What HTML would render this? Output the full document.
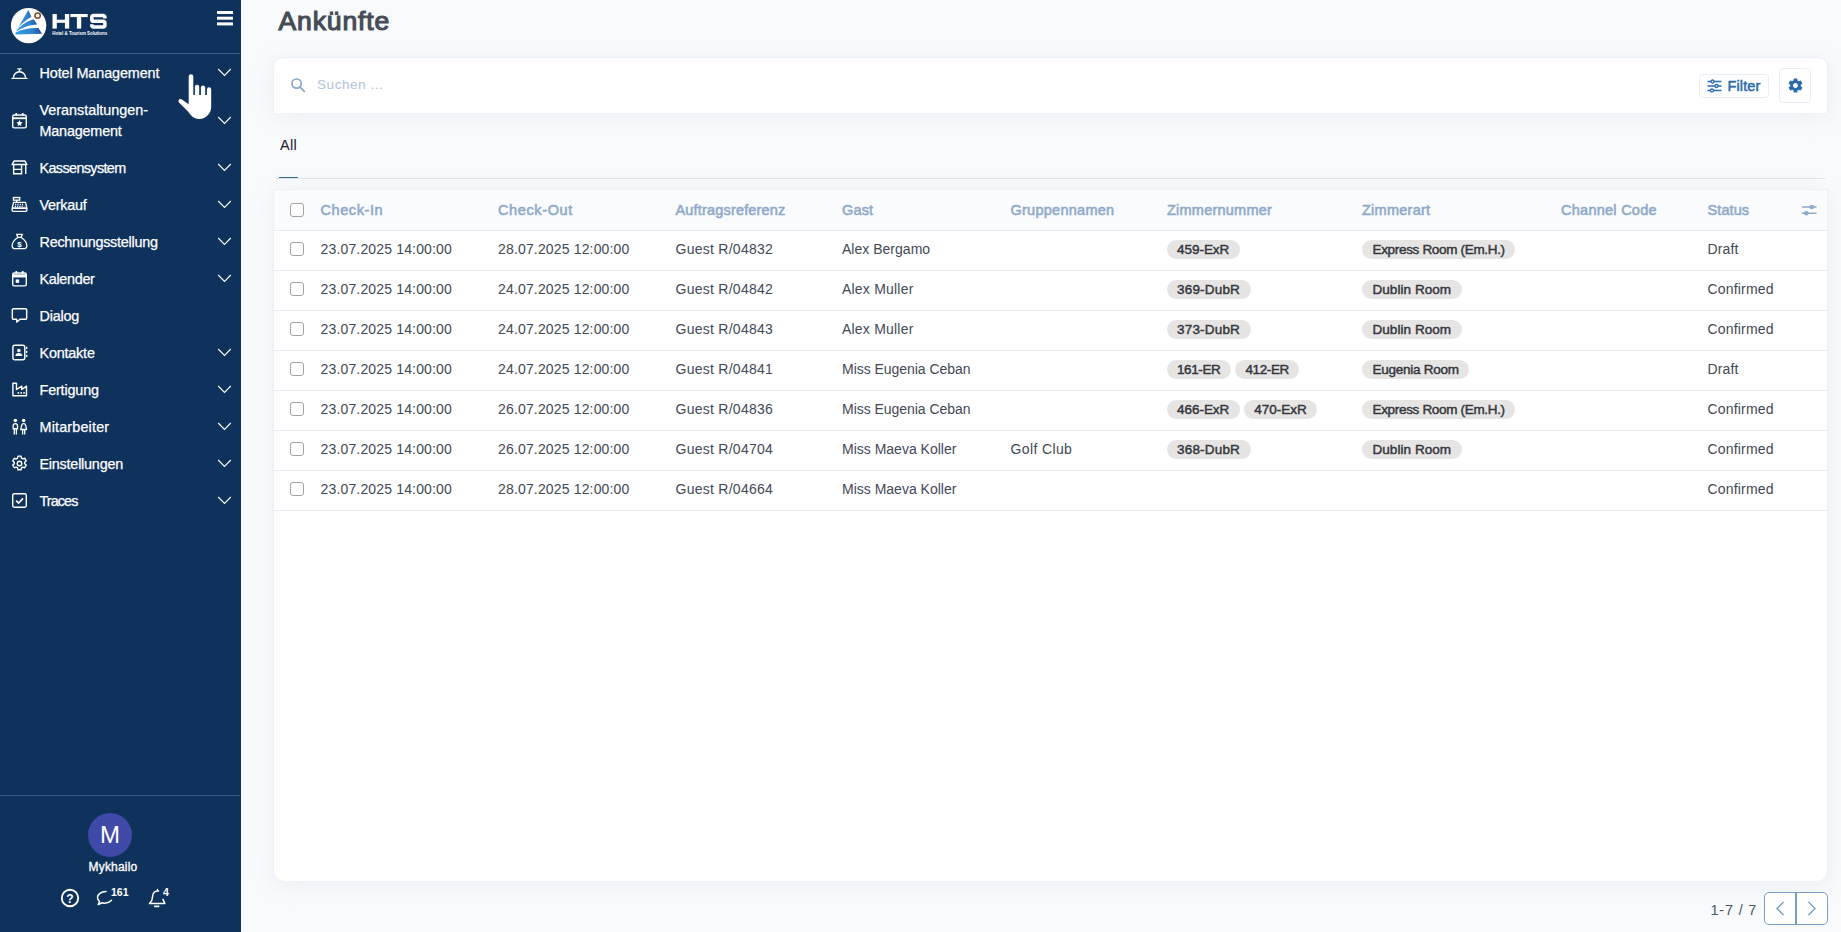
<!DOCTYPE html>
<html><head><meta charset="utf-8">
<style>
*{box-sizing:border-box;margin:0;padding:0}
html,body{width:1841px;height:932px;overflow:hidden}
body{font-family:"Liberation Sans",sans-serif;background:#f8fafc;position:relative;color:#374151}
span{white-space:nowrap}
#sb{position:absolute;left:0;top:0;width:241px;height:932px;background:#0f325c;color:#fff}
#sb .div1{position:absolute;left:0;top:53px;width:240px;height:1px;background:#3d5a80}
#sb .div2{position:absolute;left:0;top:795px;width:240px;height:1px;background:#3d5a80}
.mi{position:absolute;left:39.5px;font-size:14.4px;line-height:21px;color:#fff;white-space:nowrap;-webkit-text-stroke:0.25px #fff}
.ic{position:absolute;left:10.5px;width:17px;height:17px;margin-top:0.2px}
.ch{position:absolute;left:217px;width:15px;height:9px}
#main{position:absolute;left:241px;top:0;width:1600px;height:932px}
h1{position:absolute;left:37.5px;top:5.5px;font-size:26.5px;line-height:30px;color:#464c56;font-weight:normal;-webkit-text-stroke:1.15px #464c56}
.card{position:absolute;background:#fff;box-shadow:inset 0 1px 0 #ebf0f7,inset 1px 0 0 #ebf0f7,inset -1px 0 0 #ebf0f7,0 4px 22px rgba(203,213,225,.28)}
.in{position:absolute;left:1px;top:0;width:1553px;height:100%}
#search{left:32px;top:57px;width:1555px;height:56px;border-radius:10px 10px 0 0}
#tbl{left:32px;top:189px;width:1555px;height:692px;overflow:hidden;border-radius:0 0 10px 10px}
.hdr{position:absolute;left:0;top:1px;width:100%;height:41px;background:#f9fbfd;border-bottom:1px solid #e5ecf4}
.row{position:absolute;left:0;width:100%;height:40px;border-bottom:1px solid #e5ecf4}
.c{position:absolute;top:0;line-height:37px;font-size:14px;white-space:nowrap;color:#424955}
.hdr .c{top:-2px;line-height:44px;color:#8fa9c8;font-weight:normal;-webkit-text-stroke:0.55px #8fa9c8;font-size:14.5px}
.cb{position:absolute;left:16px;width:14px;height:14px;border:1px solid #a3a3a3;border-radius:3px;background:#fff}
.tag{display:inline-block;height:19px;line-height:19px;border-radius:10px;background:#e7e5e4;padding:0 10.5px;font-size:13.5px;color:#33363d;-webkit-text-stroke:0.45px #33363d;margin-right:4px;vertical-align:middle;position:relative;top:-1px}
</style></head><body>
<div id="sb">
<div class="div1"></div><div class="div2"></div>
<svg style="position:absolute;left:0;top:0;width:120px;height:50px" viewBox="0 0 120 50">
<defs><linearGradient id="lg" gradientUnits="userSpaceOnUse" x1="15" y1="30" x2="42" y2="22"><stop offset="0" stop-color="#2f9fe0"/><stop offset="0.55" stop-color="#2f86cf"/><stop offset="1" stop-color="#1b3f8f"/></linearGradient></defs>
<circle cx="28.600" cy="25.600" r="17.700" fill="#fff"/>
<path d="M28.300 10.100L31.400 16.700C25 20.500 19.500 25.500 16.800 29.600L15.600 32.200z" fill="url(#lg)"/>
<path d="M17.600 29.600C21.500 25 27.500 21 33.700 19.300L37.300 24.400C29.500 24.600 21.500 27.800 16.300 31.400z" fill="url(#lg)"/>
<path d="M15.700 32.600C22 29 30.500 27.600 38.500 28L42 33.700 15.500 34.400z" fill="url(#lg)"/>
<circle cx="37.600" cy="15.600" r="2.700" fill="#fff" stroke="#8a4a1c" stroke-width="1.500"/>
<g fill="#fff"><rect x="52.500" y="14" width="4.300" height="14.600"/><rect x="64.900" y="14" width="4.300" height="14.600"/><rect x="54" y="19.700" width="13" height="3.100"/>
<rect x="70.400" y="14" width="17.300" height="3.100"/><rect x="76.900" y="14" width="4.300" height="14.600"/></g>
<path d="M104.900 18.600V17.600Q104.900 15.600 102.900 15.600H93.800Q91.800 15.600 91.800 17.600V19.400Q91.800 21.300 93.800 21.300H102.900Q104.900 21.300 104.900 23.200V25Q104.900 27 102.900 27H93.800Q91.800 27 91.800 25V24.200" fill="none" stroke="#fff" stroke-width="3.500"/>
<text x="52.300" y="34.500" font-family="Liberation Sans" font-weight="bold" font-size="4.600" fill="#fff" textLength="54.800" lengthAdjust="spacingAndGlyphs">Hotel &amp; Tourism Solutions</text>
</svg>
<div style="position:absolute;left:217px;top:11px;width:16px;height:2.600px;background:#fff;box-shadow:0 5.700px 0 #fff,0 11.400px 0 #fff"></div>
<svg class="ic" style="top:64px" viewBox="0 0 18 18" fill="none" stroke="#fff" stroke-width="1.5"><path d="M1 15.2h16" stroke-linecap="round"/><path d="M2.600 14.600a6.400 6.400 0 0 1 12.800 0"/><path d="M7.300 5.200h3.400" stroke-linecap="round"/><path d="M9 5.400v2.600"/></svg>
<div class="mi" style="top:63px"><span style="letter-spacing:-0.106px">Hotel Management</span></div>
<svg class="ch" style="top:68px" viewBox="0 0 15 9" fill="none" stroke="#fff" stroke-width="1.1"><path d="M1.200 1l6.300 6.400L13.800 1"/></svg>
<svg class="ic" style="top:159px" viewBox="0 0 18 18" fill="none" stroke="#fff" stroke-width="1.5"><path d="M3.200 2.200h11.600l2 3.600H1.200z" stroke-linejoin="round"/><path d="M2.800 6v9.600h8.400V6M2.800 11h8.400M15.600 6v10"/></svg>
<div class="mi" style="top:158px"><span style="letter-spacing:-0.621px">Kassensystem</span></div>
<svg class="ch" style="top:163px" viewBox="0 0 15 9" fill="none" stroke="#fff" stroke-width="1.1"><path d="M1.200 1l6.300 6.400L13.800 1"/></svg>
<svg class="ic" style="top:196px" viewBox="0 0 18 18" fill="none" stroke="#fff" stroke-width="1.4"><rect x="2.600" y="1.600" width="6.600" height="2.800"/><path d="M6 4.400v2.200"/><path d="M2.600 6.800h12.800l1.400 6.200H1.200z" stroke-linejoin="round"/><rect x="1.200" y="13" width="15.600" height="3.200" rx="1"/><path d="M4.400 9h9.200M4 11h10" stroke-dasharray="1.2 1.2"/></svg>
<div class="mi" style="top:195px"><span style="letter-spacing:-0.260px">Verkauf</span></div>
<svg class="ch" style="top:200px" viewBox="0 0 15 9" fill="none" stroke="#fff" stroke-width="1.1"><path d="M1.200 1l6.300 6.400L13.800 1"/></svg>
<svg class="ic" style="top:233px" viewBox="0 0 18 18" fill="none" stroke="#fff" stroke-width="1.4"><path d="M6 1.400h6L10.800 4.600H7.200z" stroke-linejoin="round"/><path d="M7.200 4.800C3.600 7.200 1.200 10.800 1.200 13.400c0 2 1.600 3.200 3.600 3.200h8.400c2 0 3.600-1.200 3.600-3.200 0-2.600-2.400-6.200-6-8.600"/><text x="9" y="14.600" font-size="8.500" font-weight="bold" fill="#fff" stroke="none" text-anchor="middle" font-family="Liberation Sans">$</text></svg>
<div class="mi" style="top:232px"><span style="letter-spacing:-0.244px">Rechnungsstellung</span></div>
<svg class="ch" style="top:237px" viewBox="0 0 15 9" fill="none" stroke="#fff" stroke-width="1.1"><path d="M1.200 1l6.300 6.400L13.800 1"/></svg>
<svg class="ic" style="top:270px" viewBox="0 0 18 18" fill="none" stroke="#fff" stroke-width="1.5"><rect x="1.800" y="3.200" width="14.400" height="13.600" rx="1.800"/><path d="M1.800 6.200h14.400" stroke-width="3.400"/><path d="M5.600 1v3M12.400 1v3" stroke-width="1.800"/><rect x="5" y="10" width="3.600" height="3.600" fill="#fff" stroke="none"/></svg>
<div class="mi" style="top:269px"><span style="letter-spacing:-0.316px">Kalender</span></div>
<svg class="ch" style="top:274px" viewBox="0 0 15 9" fill="none" stroke="#fff" stroke-width="1.1"><path d="M1.200 1l6.300 6.400L13.800 1"/></svg>
<svg class="ic" style="top:307px" viewBox="0 0 18 18" fill="none" stroke="#fff" stroke-width="1.5"><path d="M2.800 1.800h12.400a1.400 1.400 0 0 1 1.400 1.400v8.400a1.400 1.400 0 0 1-1.400 1.400H9.600L6 16v-3H2.800a1.400 1.400 0 0 1-1.400-1.400V3.200a1.400 1.400 0 0 1 1.400-1.400z" stroke-linejoin="round"/></svg>
<div class="mi" style="top:306px"><span style="letter-spacing:-0.222px">Dialog</span></div>
<svg class="ic" style="top:344px" viewBox="0 0 18 18" fill="none" stroke="#fff" stroke-width="1.5"><rect x="2" y="1.400" width="12.600" height="15.200" rx="2"/><circle cx="8.300" cy="6.800" r="1.900" fill="#fff" stroke="none"/><path d="M4.600 12.600c0-2.200 1.600-3.200 3.700-3.200s3.700 1 3.700 3.200z" fill="#fff" stroke="none"/><path d="M16.600 3v2.400M16.600 7.200v2.400M16.600 11.400v2.400" stroke-width="1.4"/></svg>
<div class="mi" style="top:343px"><span style="letter-spacing:-0.202px">Kontakte</span></div>
<svg class="ch" style="top:348px" viewBox="0 0 15 9" fill="none" stroke="#fff" stroke-width="1.1"><path d="M1.200 1l6.300 6.400L13.800 1"/></svg>
<svg class="ic" style="top:381px" viewBox="0 0 18 18" fill="none" stroke="#fff" stroke-width="1.5"><path d="M2 2.400v13.200h14.400V5.400l-5 3.600V5.400L5.800 9V2.400z" stroke-linejoin="round"/><path d="M7 12.600h1.600M10 12.600h1.600M13 12.600h1.600" stroke-width="1.8"/></svg>
<div class="mi" style="top:380px"><span style="letter-spacing:-0.162px">Fertigung</span></div>
<svg class="ch" style="top:385px" viewBox="0 0 15 9" fill="none" stroke="#fff" stroke-width="1.1"><path d="M1.200 1l6.300 6.400L13.800 1"/></svg>
<svg class="ic" style="top:418px" viewBox="0 0 18 18" fill="none" stroke="#fff" stroke-width="1.4"><circle cx="4.600" cy="2.600" r="1.900" fill="#fff" stroke="none"/><circle cx="13.400" cy="2.600" r="1.900" fill="#fff" stroke="none"/><path d="M2.300 11.400V8.200a2.300 2.300 0 0 1 4.600 0v3.200z"/><path d="M3.500 11.600v5.800M5.700 11.600v5.800"/><path d="M13.400 6c-1.300 0-1.900.8-2.100 1.800l-1 4.400h6.200l-1-4.400c-.2-1-.8-1.800-2.100-1.800z" stroke-linejoin="round"/><path d="M12.300 12.400v5M14.500 12.400v5"/></svg>
<div class="mi" style="top:417px"><span style="letter-spacing:0.162px">Mitarbeiter</span></div>
<svg class="ch" style="top:422px" viewBox="0 0 15 9" fill="none" stroke="#fff" stroke-width="1.1"><path d="M1.200 1l6.300 6.400L13.800 1"/></svg>
<svg class="ic" style="top:455px" viewBox="0 0 18 18" fill="none" stroke="#fff" stroke-width="1.5"><circle cx="9" cy="9" r="2.400"/><path d="M7.400 1.200h3.200l.5 2.200 1.300.7 2.100-.7 1.600 2.800-1.600 1.500v1.500l1.600 1.500-1.600 2.800-2.100-.7-1.300.7-.5 2.200H7.400l-.5-2.200-1.300-.7-2.100.7-1.600-2.800 1.600-1.500V7.800L1.900 6.300l1.600-2.800 2.100.7 1.300-.7z" stroke-linejoin="round"/></svg>
<div class="mi" style="top:454px"><span style="letter-spacing:-0.227px">Einstellungen</span></div>
<svg class="ch" style="top:459px" viewBox="0 0 15 9" fill="none" stroke="#fff" stroke-width="1.1"><path d="M1.200 1l6.300 6.400L13.800 1"/></svg>
<svg class="ic" style="top:492px" viewBox="0 0 18 18" fill="none" stroke="#fff" stroke-width="1.5"><rect x="1.800" y="1.800" width="14.400" height="14.400" rx="1.800"/><path d="M5.400 9.200l2.600 2.600 4.800-5" stroke-width="1.7"/></svg>
<div class="mi" style="top:491px"><span style="letter-spacing:-0.911px">Traces</span></div>
<svg class="ch" style="top:496px" viewBox="0 0 15 9" fill="none" stroke="#fff" stroke-width="1.1"><path d="M1.200 1l6.300 6.400L13.800 1"/></svg>
<svg class="ic" style="top:112px" viewBox="0 0 18 18" fill="none" stroke="#fff" stroke-width="1.5"><rect x="1.800" y="3.200" width="14.400" height="13.600" rx="1.800"/><path d="M1.800 6.600h14.400" stroke-width="2"/><path d="M5.600 1v3M12.400 1v3" stroke-width="1.800"/><path d="M9 8.600l1 2.100 2.300.3-1.700 1.600.4 2.300-2-1.100-2 1.100.4-2.300-1.700-1.600 2.300-.3z" fill="#fff" stroke="none"/></svg>
<div class="mi" style="top:100px"><span style="letter-spacing:-0.021px">Veranstaltungen-</span><br><span style="letter-spacing:-0.194px">Management</span></div>
<svg class="ch" style="top:116px" viewBox="0 0 15 9" fill="none" stroke="#fff" stroke-width="1.1"><path d="M1.200 1l6.300 6.400L13.800 1"/></svg>
<svg style="position:absolute;left:170px;top:55px;width:70px;height:80px" viewBox="0 0 70 80"><path d="M18.700 21.600a2.300 2.300 0 0 1 4.600 0V39.900h1.600V31.800a2.150 2.150 0 0 1 4.300 0V39.900h1.700V32.600a2.150 2.150 0 0 1 4.300 0V39.900h1.700V34.400a2.150 2.150 0 0 1 4.300 0V51.500C41.200 58.500 36 63.900 29.500 63.900C24 63.900 21 61 18 56.500L9 47.500C7.500 45.500 9.500 43 11.500 44.200L18.700 49.300Z" fill="#fff"/></svg>
<div style="position:absolute;left:88px;top:813px;width:44px;height:44px;border-radius:22px;background:#3f4aa8;color:#fff;font-size:24px;line-height:44px;text-align:center">M</div>
<div style="position:absolute;left:0;width:226px;top:858px;text-align:center;font-size:12px;line-height:18px;color:#fff;letter-spacing:0.200px;-webkit-text-stroke:0.300px #fff">Mykhailo</div>
<svg style="position:absolute;left:59px;top:886px;width:22px;height:22px" viewBox="0 0 22 22" fill="none" stroke="#fff"><circle cx="11" cy="12" r="8.200" stroke-width="1.900"/><text x="11" y="16.500" font-family="Liberation Sans" font-weight="bold" font-size="12" fill="#fff" stroke="none" text-anchor="middle">?</text></svg>
<svg style="position:absolute;left:95px;top:886px;width:22px;height:22px" viewBox="0 0 22 22" fill="none" stroke="#fff" stroke-width="1.500"><path d="M11 5.500C6 5.500 2.500 8.500 2.500 11.500c0 1.800.8 3 2 4l-1.300 3 4-1.700c1 .4 2.400.4 3.500.2 2.300-.3 4.500-1.300 5.800-2.800" stroke-linecap="round" stroke-linejoin="round"/></svg>
<div style="position:absolute;left:111px;top:885px;font-size:10.500px;font-weight:bold;line-height:14px;color:#fff">161</div>
<svg style="position:absolute;left:146px;top:886px;width:22px;height:24px" viewBox="0 0 22 24" fill="none" stroke="#fff" stroke-width="1.500"><path d="M11.500 3.500v1.600M12.500 5C8.500 4.500 6.500 7.500 6.500 11c0 3-1.200 4.800-3 6.600h15.300l-1.800-4.200" stroke-linecap="round" stroke-linejoin="round"/><path d="M8.800 20.300h3.800" stroke-width="1.800" stroke-linecap="round"/></svg>
<div style="position:absolute;left:163px;top:885px;font-size:10.500px;font-weight:bold;line-height:14px;color:#fff">4</div>
</div>
<div id="main">
<h1><span style="letter-spacing:0.884px">Ankünfte</span></h1>
<div class="card" id="search"><div class="in">
<svg style="position:absolute;left:16px;top:20px;width:16px;height:16px" viewBox="0 0 16 16" fill="none" stroke="#86a6c8" stroke-width="1.700"><circle cx="6.600" cy="6.600" r="4.600"/><path d="M10 10l4.300 4.300" stroke-linecap="round"/></svg>
<div style="position:absolute;left:43px;top:18px;font-size:13.700px;line-height:20px;color:#b1c3d8;letter-spacing:0.450px">Suchen ...</div>
<div style="position:absolute;left:1425px;top:17px;width:70px;height:24px;border:1px solid #e8eef5;border-radius:4px;background:#fff"></div>
<svg style="position:absolute;left:1433px;top:22px;width:15px;height:14px" viewBox="0 0 15 14" fill="#fff" stroke="#2a6bab" stroke-width="1.300"><path d="M0.500 2.500h14M0.500 7h14M0.500 11.500h14"/><circle cx="5.500" cy="2.500" r="1.500"/><circle cx="9.500" cy="7" r="1.500"/><circle cx="5" cy="11.500" r="1.500"/></svg>
<div style="position:absolute;left:1453.5px;top:19px;font-size:14.5px;line-height:20px;color:#2a6bab;-webkit-text-stroke:0.5px #2a6bab"><span style="letter-spacing:0.113px">Filter</span></div>
<div style="position:absolute;left:1505px;top:11px;width:32px;height:35px;border:1px solid #e8eef5;border-radius:4px;background:#fff"></div>
<svg style="position:absolute;left:1512.5px;top:20px;width:17px;height:17px" viewBox="0 0 24 24"><path fill="#2a6bab" d="M19.430 12.980c.040-.320.070-.640.070-.980s-.030-.660-.070-.980l2.110-1.650c.190-.150.240-.420.120-.640l-2-3.460c-.120-.220-.390-.300-.610-.220l-2.490 1c-.520-.400-1.080-.730-1.690-.980l-.380-2.650C14.460 2.180 14.250 2 14 2h-4c-.250 0-.460.180-.490.420l-.380 2.650c-.610.250-1.170.590-1.690.980l-2.490-1c-.230-.090-.490 0-.610.220l-2 3.460c-.130.220-.070.490.120.640l2.110 1.650c-.040.320-.070.650-.070.980s.030.660.070.980l-2.110 1.650c-.190.150-.240.420-.120.640l2 3.460c.120.220.390.300.610.220l2.490-1c.520.400 1.080.730 1.690.980l.380 2.650c.030.240.240.420.490.420h4c.250 0 .460-.180.490-.420l.380-2.650c.610-.250 1.170-.590 1.690-.980l2.490 1c.230.090.490 0 .610-.220l2-3.460c.120-.220.070-.490-.120-.640l-2.110-1.650zM12 15.500c-1.930 0-3.500-1.570-3.500-3.500s1.570-3.500 3.500-3.500 3.500 1.570 3.500 3.500-1.570 3.500-3.500 3.500z"/></svg>
</div></div>
<div style="position:absolute;left:39px;top:135px;font-size:14.500px;line-height:20px;color:#1a202c;letter-spacing:0.300px">All</div>
<div style="position:absolute;left:36px;top:178px;width:1548px;height:1px;background:#dfe3e7"></div>
<div style="position:absolute;left:38px;top:177px;width:19px;height:1px;background:#2a6aa5"></div>
<div class="card" id="tbl"><div class="in">
<div class="hdr"><div class="cb" style="top:13px"></div>
<div class="c" style="left:46.5px"><span style="letter-spacing:0.581px">Check-In</span></div>
<div class="c" style="left:224px"><span style="letter-spacing:0.630px">Check-Out</span></div>
<div class="c" style="left:401.5px"><span style="letter-spacing:0.176px">Auftragsreferenz</span></div>
<div class="c" style="left:568px"><span style="letter-spacing:0.158px">Gast</span></div>
<div class="c" style="left:736.5px"><span style="letter-spacing:0.258px">Gruppennamen</span></div>
<div class="c" style="left:893px"><span style="letter-spacing:0.231px">Zimmernummer</span></div>
<div class="c" style="left:1088px"><span style="letter-spacing:0.255px">Zimmerart</span></div>
<div class="c" style="left:1287px"><span style="letter-spacing:0.262px">Channel Code</span></div>
<div class="c" style="left:1433.5px"><span style="letter-spacing:0.098px">Status</span></div>
<svg style="position:absolute;left:1527px;top:13px;width:16px;height:14px" viewBox="0 0 16 14" fill="#8fa9c8" stroke="#8fa9c8" stroke-width="1.400"><path d="M1 4h14.500M1 10.200h14.500"/><circle cx="10.800" cy="4" r="2.300" stroke="none"/><circle cx="5.300" cy="10.200" r="2.300" stroke="none"/></svg>
</div>
<div class="row" style="top:42px"><div class="cb" style="top:11px"></div>
<div class="c" style="left:46.5px"><span style="letter-spacing:0.160px">23.07.2025 14:00:00</span></div>
<div class="c" style="left:224px"><span style="letter-spacing:0.160px">28.07.2025 12:00:00</span></div>
<div class="c" style="left:401.5px"><span style="letter-spacing:0.265px">Guest R/04832</span></div>
<div class="c" style="left:568px"><span style="letter-spacing:0.015px">Alex Bergamo</span></div>
<div class="c" style="left:892.5px"><span class="tag"><span style="letter-spacing:-0.030px">459-ExR</span></span></div>
<div class="c" style="left:1088px"><span class="tag"><span style="letter-spacing:-0.325px">Express Room (Em.H.)</span></span></div>
<div class="c" style="left:1433.5px"><span style="letter-spacing:0.127px">Draft</span></div>
</div>
<div class="row" style="top:82px"><div class="cb" style="top:11px"></div>
<div class="c" style="left:46.5px"><span style="letter-spacing:0.160px">23.07.2025 14:00:00</span></div>
<div class="c" style="left:224px"><span style="letter-spacing:0.160px">24.07.2025 12:00:00</span></div>
<div class="c" style="left:401.5px"><span style="letter-spacing:0.265px">Guest R/04842</span></div>
<div class="c" style="left:568px"><span style="letter-spacing:0.210px">Alex Muller</span></div>
<div class="c" style="left:892.5px"><span class="tag"><span style="letter-spacing:0.186px">369-DubR</span></span></div>
<div class="c" style="left:1088px"><span class="tag"><span style="letter-spacing:0.055px">Dublin Room</span></span></div>
<div class="c" style="left:1433.5px"><span style="letter-spacing:0.188px">Confirmed</span></div>
</div>
<div class="row" style="top:122px"><div class="cb" style="top:11px"></div>
<div class="c" style="left:46.5px"><span style="letter-spacing:0.160px">23.07.2025 14:00:00</span></div>
<div class="c" style="left:224px"><span style="letter-spacing:0.160px">24.07.2025 12:00:00</span></div>
<div class="c" style="left:401.5px"><span style="letter-spacing:0.265px">Guest R/04843</span></div>
<div class="c" style="left:568px"><span style="letter-spacing:0.210px">Alex Muller</span></div>
<div class="c" style="left:892.5px"><span class="tag"><span style="letter-spacing:0.186px">373-DubR</span></span></div>
<div class="c" style="left:1088px"><span class="tag"><span style="letter-spacing:0.055px">Dublin Room</span></span></div>
<div class="c" style="left:1433.5px"><span style="letter-spacing:0.188px">Confirmed</span></div>
</div>
<div class="row" style="top:162px"><div class="cb" style="top:11px"></div>
<div class="c" style="left:46.5px"><span style="letter-spacing:0.160px">23.07.2025 14:00:00</span></div>
<div class="c" style="left:224px"><span style="letter-spacing:0.160px">24.07.2025 12:00:00</span></div>
<div class="c" style="left:401.5px"><span style="letter-spacing:0.265px">Guest R/04841</span></div>
<div class="c" style="left:568px"><span style="letter-spacing:-0.035px">Miss Eugenia Ceban</span></div>
<div class="c" style="left:892.5px"><span class="tag"><span style="letter-spacing:-0.386px">161-ER</span></span><span class="tag"><span style="letter-spacing:-0.386px">412-ER</span></span></div>
<div class="c" style="left:1088px"><span class="tag"><span style="letter-spacing:-0.247px">Eugenia Room</span></span></div>
<div class="c" style="left:1433.5px"><span style="letter-spacing:0.127px">Draft</span></div>
</div>
<div class="row" style="top:202px"><div class="cb" style="top:11px"></div>
<div class="c" style="left:46.5px"><span style="letter-spacing:0.160px">23.07.2025 14:00:00</span></div>
<div class="c" style="left:224px"><span style="letter-spacing:0.160px">26.07.2025 12:00:00</span></div>
<div class="c" style="left:401.5px"><span style="letter-spacing:0.265px">Guest R/04836</span></div>
<div class="c" style="left:568px"><span style="letter-spacing:-0.035px">Miss Eugenia Ceban</span></div>
<div class="c" style="left:892.5px"><span class="tag"><span style="letter-spacing:-0.030px">466-ExR</span></span><span class="tag"><span style="letter-spacing:-0.030px">470-ExR</span></span></div>
<div class="c" style="left:1088px"><span class="tag"><span style="letter-spacing:-0.325px">Express Room (Em.H.)</span></span></div>
<div class="c" style="left:1433.5px"><span style="letter-spacing:0.188px">Confirmed</span></div>
</div>
<div class="row" style="top:242px"><div class="cb" style="top:11px"></div>
<div class="c" style="left:46.5px"><span style="letter-spacing:0.160px">23.07.2025 14:00:00</span></div>
<div class="c" style="left:224px"><span style="letter-spacing:0.160px">26.07.2025 12:00:00</span></div>
<div class="c" style="left:401.5px"><span style="letter-spacing:0.265px">Guest R/04704</span></div>
<div class="c" style="left:568px"><span style="letter-spacing:-0.002px">Miss Maeva Koller</span></div>
<div class="c" style="left:736.5px"><span style="letter-spacing:0.374px">Golf Club</span></div>
<div class="c" style="left:892.5px"><span class="tag"><span style="letter-spacing:0.186px">368-DubR</span></span></div>
<div class="c" style="left:1088px"><span class="tag"><span style="letter-spacing:0.055px">Dublin Room</span></span></div>
<div class="c" style="left:1433.5px"><span style="letter-spacing:0.188px">Confirmed</span></div>
</div>
<div class="row" style="top:282px"><div class="cb" style="top:11px"></div>
<div class="c" style="left:46.5px"><span style="letter-spacing:0.160px">23.07.2025 14:00:00</span></div>
<div class="c" style="left:224px"><span style="letter-spacing:0.160px">28.07.2025 12:00:00</span></div>
<div class="c" style="left:401.5px"><span style="letter-spacing:0.265px">Guest R/04664</span></div>
<div class="c" style="left:568px"><span style="letter-spacing:-0.002px">Miss Maeva Koller</span></div>
<div class="c" style="left:1433.5px"><span style="letter-spacing:0.188px">Confirmed</span></div>
</div>
</div></div>
<div style="position:absolute;left:1469.500px;top:900px;font-size:14.500px;line-height:20px;color:#4b5563"><span style="letter-spacing:0.798px">1-7 / 7</span></div>
<div style="position:absolute;left:1523px;top:892px;width:64px;height:33px;border:1px solid #7a9cc4;border-radius:5px;background:#fff"></div>
<div style="position:absolute;left:1554px;top:892px;width:2px;height:33px;background:#7a9cc4"></div>
<svg style="position:absolute;left:1533px;top:900px;width:12px;height:17px" viewBox="0 0 12 17" fill="none" stroke="#7a9cc4" stroke-width="1.400"><path d="M9.500 2L3 8.500 9.500 15"/></svg>
<svg style="position:absolute;left:1565px;top:900px;width:12px;height:17px" viewBox="0 0 12 17" fill="none" stroke="#7a9cc4" stroke-width="1.400"><path d="M2.500 2L9 8.500 2.500 15"/></svg>
</div>
</body></html>
